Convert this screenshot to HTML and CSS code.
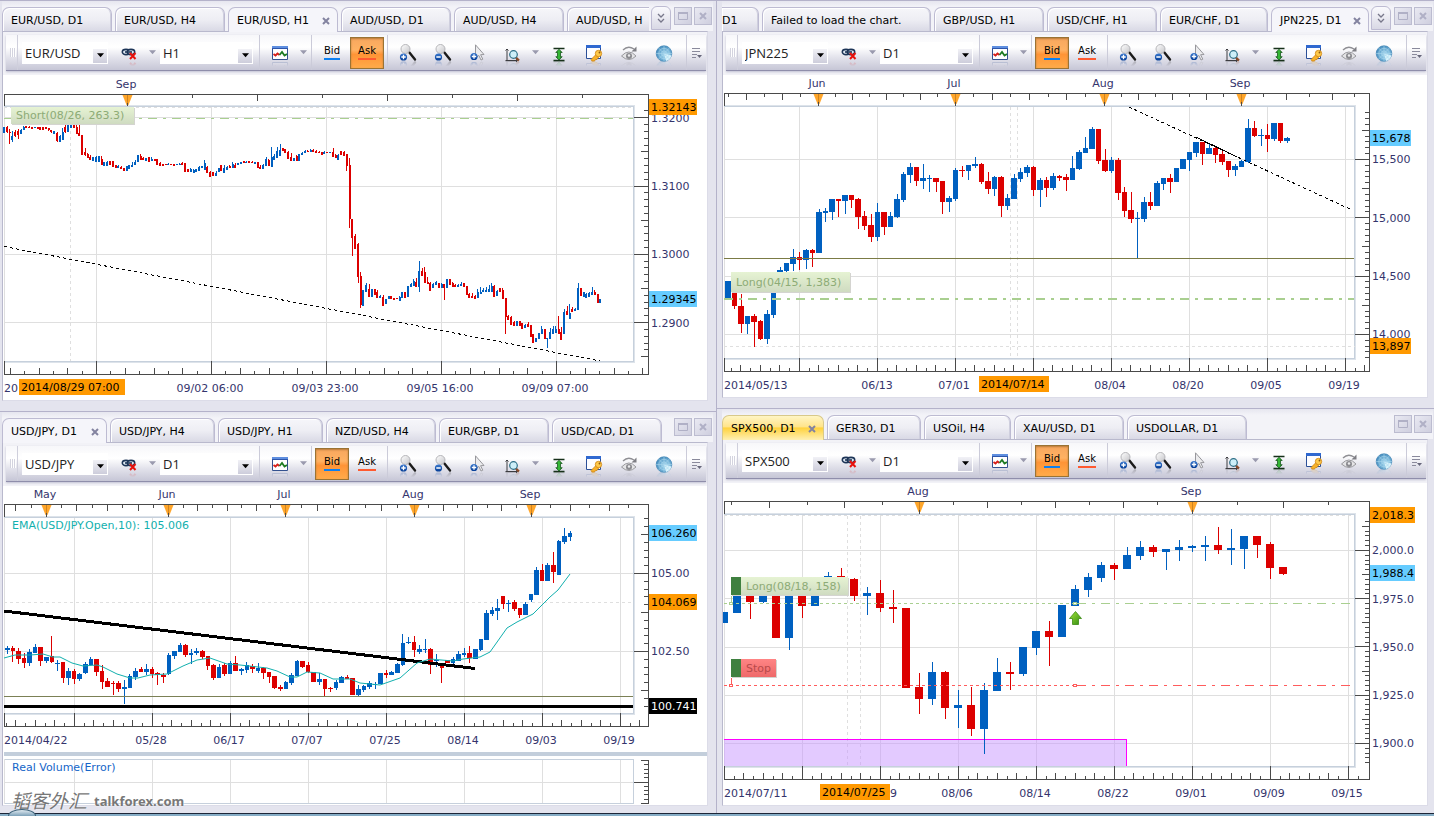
FILE: index.html
```html
<!DOCTYPE html>
<html lang="en">
<head>
<meta charset="utf-8">
<title>Trading Charts</title>
<link rel="stylesheet" href="styles.css">
</head>
<body>
<svg class="defs" aria-hidden="true">
  <defs>
    <linearGradient id="lens" x1="0" y1="0" x2="1" y2="1"><stop offset="0" stop-color="#fff"/><stop offset="1" stop-color="#c4c4c8"/></linearGradient>
    <linearGradient id="blueBall" x1="0" y1="0" x2="0" y2="1"><stop offset="0" stop-color="#3d7bd0"/><stop offset="1" stop-color="#003a94"/></linearGradient>
    <radialGradient id="radarFill" cx=".6" cy=".6" r=".7"><stop offset="0" stop-color="#a9dcf2"/><stop offset="1" stop-color="#3b84b8"/></radialGradient>
    <linearGradient id="greenBar" x1="0" y1="0" x2="1" y2="0"><stop offset="0" stop-color="#0c7a12"/><stop offset=".5" stop-color="#3cc43c"/><stop offset="1" stop-color="#0c6a10"/></linearGradient>
    <linearGradient id="tagGreen" x1="0" y1="0" x2="0" y2="1"><stop offset="0" stop-color="#e6f3d3"/><stop offset="1" stop-color="#cfdbc1"/></linearGradient>
    <linearGradient id="tagRed" x1="0" y1="0" x2="0" y2="1"><stop offset="0" stop-color="#ff8585"/><stop offset="1" stop-color="#ee6a6a"/></linearGradient>
    <linearGradient id="arrowGreen" x1="0" y1="0" x2="1" y2="1"><stop offset="0" stop-color="#a5e53a"/><stop offset="1" stop-color="#2f8a10"/></linearGradient>
  </defs>
  <symbol id="i-link" viewBox="0 0 18 18">
    <g fill="#dfe8f2" stroke="#1d3557" stroke-width="1.600"><ellipse cx="6" cy="8" rx="3.700" ry="2.600"/><ellipse cx="11" cy="8" rx="3.700" ry="2.600"/></g>
    <path d="M5 8h7" stroke="#1d3557" stroke-width="1.600"/><path d="M10 9l5.500 6M15.500 9l-5.500 6" stroke="#e8120c" stroke-width="2"/>
  </symbol>
  <symbol id="i-chart" viewBox="0 0 18 18">
    <path d="M1.500 3.500h15v12h-15z" fill="#fff" stroke="#33518f"/><path d="M1 2h16v3H1z" fill="#5f8fe0"/><path d="M1 4h16v1H1z" fill="#2d56ac"/>
    <path d="M2.500 10l2 1.500 2-2 2 1.500" fill="none" stroke="#d8201a" stroke-width="1.800"/><path d="M8.500 11l2.500-3 2.500 3.500 2.500-1.500" fill="none" stroke="#1c7a20" stroke-width="1.800"/>
  </symbol>
  <symbol id="i-zoomin" viewBox="0 0 18 18">
    <path d="M10 8l6 7.500" stroke="#1b1b1b" stroke-width="2.400" stroke-linecap="round"/><circle cx="6.500" cy="5" r="4.500" fill="url(#lens)" stroke="#b4b4b8"/>
    <circle cx="4.500" cy="13" r="3.600" fill="url(#blueBall)"/><path d="M2.300 13h4.400M4.500 10.800v4.400" stroke="#fff" stroke-width="1.300"/>
  </symbol>
  <symbol id="i-zoomout" viewBox="0 0 18 18">
    <path d="M10 8l6 7.500" stroke="#1b1b1b" stroke-width="2.400" stroke-linecap="round"/><circle cx="6.500" cy="5" r="4.500" fill="url(#lens)" stroke="#b4b4b8"/>
    <circle cx="4.500" cy="13" r="3.600" fill="url(#blueBall)"/><path d="M2.300 13h4.400" stroke="#fff" stroke-width="1.500"/>
  </symbol>
  <symbol id="i-cursor" viewBox="0 0 18 18">
    <path d="M6.500 .8l8.500 9.700-3.400.2 2.200 4.500-1.800.8-2.200-4.600-3.300 2.600z" fill="#ececee" stroke="#97979c"/>
    <circle cx="5" cy="12.500" r="3.600" fill="url(#blueBall)"/><path d="M2.800 12.500h4.400M5 10.300v4.400" stroke="#fff" stroke-width="1.300"/>
  </symbol>
  <symbol id="i-axiszoom" viewBox="0 0 18 18">
    <path d="M3 5v12M1.500 6.500L3 5l1.500 1.500M1.500 16.500h12M12 15.200l1.500 1.300-1.500 1.300" fill="none" stroke="#3c3c40"/>
    <path d="M11.500 13l3.500 3.500" stroke="#8a4a28" stroke-width="2.200"/><circle cx="9.500" cy="10.500" r="3.800" fill="#cdeff8" stroke="#2d6f86" stroke-width="1.200"/>
  </symbol>
  <symbol id="i-height" viewBox="0 0 18 18">
    <path d="M3.500 4.500h11M3.500 16.500h11" stroke="#17301a" stroke-width="1.400"/><path d="M9 5.200l3.200 3.300h-1.700v4.200h1.700L9 16l-3.200-3.300h1.700V8.500H5.800z" fill="url(#greenBar)" stroke="#0b4f10" stroke-width=".7"/>
  </symbol>
  <symbol id="i-key" viewBox="0 0 18 18">
    <path d="M1.500 1.500h14v13h-14z" fill="#fdfdff" stroke="#2b4f97"/><path d="M1 1h15v3H1z" fill="#2f68d0"/>
    <path d="M11.500 10L6 15.500l1 1.500h2.500l1-1.500h1.500l2-3" fill="#f6b12a" stroke="#ce8412" stroke-width=".8"/><circle cx="13.500" cy="9.500" r="3.200" fill="#ffc94a" stroke="#ce8412" stroke-width=".8"/><circle cx="14.500" cy="8.500" r=".9" fill="#8a5a10"/>
  </symbol>
  <symbol id="i-eye" viewBox="0 0 18 18">
    <path d="M1.500 12q7.500-8 14.500 0-7 7-14.500 0z" fill="#e4e4e6" stroke="#97979b"/><circle cx="9" cy="12" r="3" fill="#8b8b90"/><circle cx="9" cy="11.500" r="1.200" fill="#ececee"/>
    <path d="M3 6q5-5 11-1" fill="none" stroke="#8f8f94" stroke-width="1.300"/><path d="M16.500 2.500v5h-5z" fill="#7e7e84"/>
  </symbol>
  <symbol id="i-radar" viewBox="0 0 18 18">
    <circle cx="9" cy="9.500" r="7.800" fill="url(#radarFill)" stroke="#2f78ac" stroke-width=".6"/><path d="M9 9.500l7.500 2A7.800 7.800 0 0 1 11 17z" fill="#d8f2fb"/>
    <g fill="none" stroke="#a9d6ec" stroke-width=".6"><circle cx="9" cy="9.500" r="5.200"/><circle cx="9" cy="9.500" r="2.600"/><path d="M9 1.700v15.600M1.200 9.500h15.600M3.500 4l11 11M14.500 4l-11 11"/></g>
  </symbol>
  <symbol id="i-down" viewBox="0 0 8 5"><path d="M0 0h8L4 4.500z"/></symbol>
  <symbol id="i-more" viewBox="0 0 12 12"><path d="M1 1.500h8M1 4.500h8M1 7.500h5M1 10.500h4" stroke="#8a8a9c"/><path d="M6 8h5l-2.500 3z" fill="#66667a"/></symbol>
  <symbol id="i-x" viewBox="0 0 8 8"><path d="M1 1l6 6M7 1L1 7" stroke="currentColor" stroke-width="2"/></symbol>
  <symbol id="i-restore" viewBox="0 0 10 8"><path d="M.5 1h9v6.500h-9z" fill="none" stroke="currentColor"/><path d="M0 0h10v2H0z" fill="currentColor"/></symbol>
  <symbol id="i-chevrons" viewBox="0 0 8 10"><path d="M1 1l3 3 3-3M1 6l3 3 3-3" fill="none" stroke="#77778a" stroke-width="1.300"/></symbol>
</svg>

<template id="toolbar">
  <span class="grip"></span>
  <span class="combo combo-symbol"><select aria-label="Instrument"></select><span class="combo-arrow"><svg class="tri"><use href="#i-down"/></svg></span></span>
  <button class="tool tool-link" aria-label="Unlink chart"><svg class="icon"><use href="#i-link"/></svg></button>
  <button class="drop" aria-label="Link options"><svg class="tri"><use href="#i-down"/></svg></button>
  <span class="combo combo-period"><select aria-label="Period"></select><span class="combo-arrow"><svg class="tri"><use href="#i-down"/></svg></span></span>
  <span class="sep sep-wide"></span>
  <button class="tool tool-chart" aria-label="Chart type"><svg class="icon"><use href="#i-chart"/></svg></button>
  <button class="drop" aria-label="Chart type options"><svg class="tri"><use href="#i-down"/></svg></button>
  <span class="sep"></span>
  <button class="side side-bid"><span>Bid</span></button>
  <button class="side side-ask"><span>Ask</span></button>
  <span class="sep sep-near"></span>
  <button class="tool" aria-label="Zoom in"><svg class="icon"><use href="#i-zoomin"/></svg></button>
  <button class="tool" aria-label="Zoom out"><svg class="icon"><use href="#i-zoomout"/></svg></button>
  <button class="tool" aria-label="Cursor"><svg class="icon"><use href="#i-cursor"/></svg></button>
  <button class="tool" aria-label="Axis zoom"><svg class="icon"><use href="#i-axiszoom"/></svg></button>
  <button class="drop drop-narrow" aria-label="Axis zoom options"><svg class="tri"><use href="#i-down"/></svg></button>
  <button class="tool" aria-label="Fit height"><svg class="icon"><use href="#i-height"/></svg></button>
  <button class="tool" aria-label="Properties"><svg class="icon"><use href="#i-key"/></svg></button>
  <button class="tool" aria-label="Show"><svg class="icon"><use href="#i-eye"/></svg></button>
  <button class="tool" aria-label="Radar"><svg class="icon"><use href="#i-radar"/></svg></button>
  <button class="more" aria-label="More tools"><svg class="icon-more"><use href="#i-more"/></svg></button>
</template>

<main class="desk">
  <div class="column column-left">
    <section class="pane">
      <header class="strip">
        <nav class="tabs">
          <button class="tab">EUR/USD, D1</button>
          <button class="tab">EUR/USD, H4</button>
          <button class="tab tab-active">EUR/USD, H1<svg class="tab-x"><use href="#i-x"/></svg></button>
          <button class="tab">AUD/USD, D1</button>
          <button class="tab">AUD/USD, H4</button>
          <button class="tab tab-tail">AUD/USD, H</button>
        </nav>
        <button class="chevrons" aria-label="More charts"><svg><use href="#i-chevrons"/></svg></button>
        <button class="win" aria-label="Restore"><svg class="win-restore"><use href="#i-restore"/></svg></button>
        <button class="win" aria-label="Close"><svg class="win-close"><use href="#i-x"/></svg></button>
      </header>
      <div class="body">
        <div class="toolbar" data-symbol="EUR/USD" data-period="H1" data-side="ask"></div>
        <svg class="chart" id="eurusd" viewBox="3 75 704 325"></svg>
      </div>
    </section>
    <section class="pane pane-last">
      <header class="strip">
        <nav class="tabs">
          <button class="tab tab-yen tab-active">USD/JPY, D1<svg class="tab-x"><use href="#i-x"/></svg></button>
          <button class="tab tab-yen">USD/JPY, H4</button>
          <button class="tab tab-yen">USD/JPY, H1</button>
          <button class="tab">NZD/USD, H4</button>
          <button class="tab">EUR/GBP, D1</button>
          <button class="tab">USD/CAD, D1</button>
        </nav>
        <button class="win" aria-label="Restore"><svg class="win-restore"><use href="#i-restore"/></svg></button>
        <button class="win" aria-label="Close"><svg class="win-close"><use href="#i-x"/></svg></button>
      </header>
      <div class="body">
        <div class="toolbar" data-symbol="USD/JPY" data-period="D1" data-side="bid"></div>
        <svg class="chart" id="usdjpy" viewBox="3 486 704 319"></svg>
      </div>
      <div class="watermark"><span class="watermark-name" lang="zh">韬客外汇</span><span class="watermark-url">talkforex.com</span></div>
    </section>
  </div>
  <div class="column column-right">
    <section class="pane">
      <header class="strip">
        <nav class="tabs tabs-end">
          <button class="tab tab-cut">D1</button>
          <button class="tab tab-message">Failed to load the chart.</button>
          <button class="tab">GBP/USD, H1</button>
          <button class="tab">USD/CHF, H1</button>
          <button class="tab tab-franc">EUR/CHF, D1</button>
          <button class="tab tab-nikkei tab-active">JPN225, D1<svg class="tab-x"><use href="#i-x"/></svg></button>
        </nav>
        <button class="chevrons" aria-label="More charts"><svg><use href="#i-chevrons"/></svg></button>
        <button class="win" aria-label="Restore"><svg class="win-restore"><use href="#i-restore"/></svg></button>
        <button class="win" aria-label="Close"><svg class="win-close"><use href="#i-x"/></svg></button>
      </header>
      <div class="body">
        <div class="toolbar" data-symbol="JPN225" data-period="D1" data-side="bid"></div>
        <svg class="chart" id="jpn225" viewBox="723 75 704 322"></svg>
      </div>
    </section>
    <section class="pane pane-last">
      <header class="strip">
        <nav class="tabs">
          <button class="tab tab-spx tab-active tab-focus">SPX500, D1<svg class="tab-x"><use href="#i-x"/></svg></button>
          <button class="tab tab-dax">GER30, D1</button>
          <button class="tab tab-oil">USOil, H4</button>
          <button class="tab">XAU/USD, D1</button>
          <button class="tab tab-dollar">USDOLLAR, D1</button>
        </nav>
        <button class="win" aria-label="Restore"><svg class="win-restore"><use href="#i-restore"/></svg></button>
        <button class="win" aria-label="Close"><svg class="win-close"><use href="#i-x"/></svg></button>
      </header>
      <div class="body">
        <div class="toolbar" data-symbol="SPX500" data-period="D1" data-side="bid"></div>
        <svg class="chart" id="spx500" viewBox="723 483 704 322"></svg>
      </div>
    </section>
  </div>
</main>
<footer class="taskbar"><span class="orb"></span></footer>
<script src="charts.js"></script>
</body>
</html>
```
FILE: styles.css
```css
* { box-sizing: border-box; }
body { margin: 0; background: #e4e4ee; font-family: "DejaVu Sans", Verdana, sans-serif; font-size: 11px; color: #000; }
button { font: inherit; color: inherit; margin: 0; padding: 0; border: 0; background: none; }
.defs { position: absolute; width: 0; height: 0; }

.desk { display: grid; grid-template-columns: 716fr 718fr; }
.column { display: flex; flex-direction: column; min-width: 0; }
.pane { position: relative; border-top: 1px solid #b4b2ca; padding-bottom: 10px; background: #e4e4ee; }
.pane-last { padding-bottom: 7px; }
.column-left .pane { padding-left: 2px; padding-right: 8px; }
.column-right .pane { padding-left: 5px; padding-right: 6px; border-left: 1px solid #b4b2ca; }

.strip { display: flex; align-items: flex-start; height: 30px; margin-right: -5px; background: linear-gradient(#e6e6ef, #f3f3f8 6px); }
.tabs { flex: 1; min-width: 0; display: flex; gap: 3px; overflow: hidden; height: 31px; padding-top: 6px; position: relative; }
.tabs-end { justify-content: flex-end; padding-right: 1px; }
.tab { flex: none; width: 110px; height: 24px; padding: 1px 0 0 8px; text-align: left; white-space: nowrap; border: 1px solid #bdbbd2; border-bottom: 0; border-radius: 7px 7px 0 0; background: linear-gradient(#f6f6fa, #eeeef4 50%, #d9d9e5); box-shadow: inset 1px 1px 0 #fff, inset -1px 0 0 #cfcfde; }
.tab-active { display: flex; align-items: center; justify-content: space-between; height: 25px; padding-right: 7px; background: #f5f5fa; box-shadow: none; }
.tab-x { width: 8px; height: 8px; color: #8383a0; }
.tab-yen { width: 105px; }
.tab-franc { width: 108px; }
.tab-message { width: 169px; }
.tab-nikkei { width: 98px; }
.tab-spx { width: 102px; }
.tab-dax { width: 94px; }
.tab-oil { width: 87px; }
.tab-dollar { width: 120px; }
.tab-cut { width: 37px; padding-left: 0; border-left: 0; border-top-left-radius: 0; }
.tab-tail { width: 82px; border-right: 0; border-top-right-radius: 0; box-shadow: inset 1px 1px 0 #fff; }
.chevrons { width: 20px; height: 24px; margin: 5px 2px 0 1px; border: 1px solid #bdbbd2; border-radius: 6px 6px 0 0; background: linear-gradient(#fafafd, #d9d9e5); }
.chevrons svg { width: 8px; height: 10px; display: block; margin: 0 auto; }
.tab-focus { background: linear-gradient(#fff5c4, #ffe48a 45%, #ffd23e 50%, #fff0b4); border-color: #d8c98a; }
.win { width: 18px; height: 18px; margin: 6px 1px 0; border: 1px solid #bcbcd0; background: linear-gradient(135deg, #e9e9f2, #cfcfdf); color: #b0b0c6; display: flex; align-items: center; justify-content: center; }
.win-restore { width: 10px; height: 8px; }
.win-close { width: 8px; height: 8px; }

.body { border: 1px solid #b9b9cd; border-right-color: #dcdce8; border-bottom-color: #dcdce8; background: #f2f2f7; padding-top: 3px; }
.toolbar { display: flex; align-items: center; height: 36px; margin: 0 1px 4px 3px; border-bottom: 1px solid #8f8eab; background: linear-gradient(#f7f7fa, #fff 35%, #e2e2eb 65%, #c6c6d6); box-shadow: 0 1px 2px #c0c0d2; }
.grip { align-self: stretch; width: 12px; margin-right: 4px; border-right: 1px solid #cfcfdc; background: repeating-linear-gradient(90deg, #d4d4df 0 1px, #fff 1px 2px) 4px 13px / 6px 9px no-repeat; }
.combo { position: relative; display: flex; height: 22px; background: #fff; }
.combo-symbol { width: 86px; }
.combo-period { width: 93px; }
.combo select { appearance: none; width: 100%; border: 0; background: none; padding: 0 16px 0 3px; font: 13px/20px "Open Sans", sans-serif; color: #222; }
.combo-arrow { position: absolute; right: 1px; bottom: 1px; width: 14px; height: 14px; display: flex; align-items: center; justify-content: center; background: linear-gradient(#f1f1f6, #cdcddb); pointer-events: none; }
.tri { width: 7px; height: 5px; fill: #9a9aae; }
.combo-arrow .tri { fill: #000; }
.tool { width: 35px; height: 34px; display: flex; align-items: center; justify-content: center; }
.tool-link { width: 30px; margin-left: 6px; }
.tool-chart { width: 30px; margin-left: 5px; }
.icon { width: 18px; height: 18px; -webkit-box-reflect: below -2px linear-gradient(transparent 65%, rgba(0, 0, 0, .3)); }
.drop { width: 14px; display: flex; justify-content: center; }
.tool-chart + .drop { width: 16px; }
.tool-link + .drop { width: 16px; }
.drop-narrow { width: 11px; }
.sep { align-self: stretch; width: 1px; background: #cbcbd9; }
.sep-wide { margin-left: 6px; }
.sep-near { margin: 0 2px 0 3px; }
.side { width: 34px; height: 32px; font-size: 10px; line-height: 12px; }
.side span { display: inline-block; padding-bottom: 1px; border-bottom: 2px solid #0b7ff0; }
.side-bid { margin-left: 3px; }
.side-ask { margin-left: 1px; }
.side-ask span { border-color: #ff5a30; }
.side-on { border: 1px solid #9a7334; background: linear-gradient(#f7a75e, #ffb263 40%, #ff9436 55%, #ffab4a); box-shadow: inset 0 1px 2px #b8793a; }
.more { align-self: stretch; width: 20px; margin-left: auto; border-left: 1px solid #cbcbd9; display: flex; align-items: center; justify-content: center; }
.icon-more { width: 12px; height: 12px; }

.chart { display: block; width: 100%; height: auto; background: #fff; font-family: "DejaVu Sans", Verdana, sans-serif; font-size: 11px; }
.crisp { shape-rendering: crispEdges; }
.axis-text { fill: #34346c; }
.mid { text-anchor: middle; }

.watermark { position: absolute; left: 11px; bottom: 2px; display: flex; align-items: flex-end; gap: 7px; color: #777; text-shadow: 0 0 2px #fff; }
.watermark-name { font: italic 19px/22px "Noto Sans CJK SC", sans-serif; }
.watermark-url { font: bold 13px/19px "Noto Sans", sans-serif; }

.taskbar { position: relative; height: 3px; background: linear-gradient(#1c2638 1px, #86adc6 1px); overflow: visible; }
.orb { position: absolute; left: 8px; bottom: 0; width: 28px; height: 7px; border: 1px solid #3a6078; border-bottom: 0; border-radius: 14px 14px 0 0 / 7px 7px 0 0; background: linear-gradient(#dfe9f0, #7ba0b8); }
```
FILE: charts.js
```js
const BLUE = '#0060c0', RED = '#dc0000', AXIS = '#4a4a4a', GRID = '#dfdfdf', FRAME = '#c6d0dc';

const rect = (x, y, w, h, fill) => `<rect x="${Math.floor(x)}" y="${Math.floor(y)}" width="${w}" height="${h}" fill="${fill}"/>`;
const hline = (x1, x2, y, color, dash, thick = 1) => `<path d="M${x1} ${Math.floor(y) + thick / 2}H${x2}" stroke="${color}" stroke-width="${thick}"${dash ? ` stroke-dasharray="${dash}"` : ''}/>`;
const vline = (x, y1, y2, color, dash) => `<path d="M${Math.floor(x) + 0.5} ${y1}V${y2}" stroke="${color}"${dash ? ` stroke-dasharray="${dash}"` : ''}/>`;
const text = (x, y, s, cls = 'axis-text', fill = '') => `<text x="${x}" y="${y}" class="${cls}"${fill ? ` fill="${fill}"` : ''}>${s}</text>`;
const badge = (x, y, w, s, fill, color = '#000') => rect(x, y, w, 16, fill) + text(x + 2, y + 12, s, '', color);

/* "b" is a rising bar, "r" a falling one: high, body top, body bottom, low.
   Bodies take the chart's fixed width, or fill the step up to a one-pixel gap. */
function candles(c) {
  return c.bars.trim().split(/\s+/).map((bar, i) => {
    const [hi, top, bot, lo = bot] = bar.slice(1).split(',').map(Number);
    const fill = bar[0] === 'b' ? BLUE : RED;
    const x = c.x0 + c.step * i;
    const left = Math.round(x - c.lead);
    const width = c.body || Math.round(x + c.step - c.lead) - left - 1;
    return rect(x, hi, 1, lo - hi, fill) + rect(left, top, width, Math.max(1, bot - top), fill);
  }).join('');
}

function frame(c) {
  const [l, t, r, b] = c.plot;
  const ax = r + 15;
  let s = '';
  for (let x = c.gridX; x < r; x += c.gridStep) s += vline(x, t + 1, b, GRID);
  c.prices.forEach(p => { s += hline(l, r, p[0], GRID); });
  s += `<path d="M${l + .5} ${t}V${b}" stroke="${GRID}"/>`;
  s += `<path d="M${l} ${t + .5}H${r + .5}V${b + .5}H${l}" fill="none" stroke="${FRAME}"/><path d="M${l} ${t - .5}H${r + 1.5}V${b + 1.5}H${l}" fill="none" stroke="#dde3ea"/>`;
  s += `<path d="M${l + .5} ${t}V${c.top + .5}H${ax + .5}V${c.bottom + .5}H${l + .5}V${b}" fill="none" stroke="${AXIS}"/>`;
  c.ticks.forEach(v => { s += vline(Math.abs(v), c.top, c.top + (v < 0 ? 4 : 7), AXIS); });
  const sub = c.gridStep / 8;
  for (let k = -8; k < 90; k++) {
    const x = c.gridX + k * sub;
    if (x < l + 2 || x > ax - 2) continue;
    const major = k % 8 === 0;
    s += vline(x, major ? b : c.bottom - (k % 2 ? 3 : 6), c.bottom, AXIS);
  }
  const p0 = c.prices[0][0];
  const ps = c.priceStep / 10;
  for (let k = -12; k < 60; k++) {
    const y = p0 + k * ps;
    if (y < c.priceFrom || y > c.priceTo) continue;
    s += hline(k % 10 === 0 ? r + 1 : k % 5 === 0 ? ax - 7 : ax - 4, ax, y, AXIS);
  }
  s = `<g class="crisp">${s}</g>`;
  c.months.forEach(m => {
    s += `<path d="M${m[0] - 4.5} ${c.top + 1}h10l-4 10h-2z" fill="#ffa62b"/>`
      + vline(m[0], c.top + 1, c.top + 9, '#d08420') + vline(m[0], c.top + 9, t, AXIS);
  });
  c.prices.forEach(p => { s += text(ax + 3, Math.round(p[0]) + 4, p[1]); });
  c.months.forEach(m => { s += text(m[0] - 1, c.top - 6, m[1], 'axis-text mid'); });
  c.dates.forEach(d => { s += text(d[0], c.bottom + 18, d[1], d[2] ? 'axis-text' : 'axis-text mid'); });
  return s;
}

function tag(x, y, w, h, label, kind) {
  const red = kind === 'stop';
  let s = rect(x + 1, y + 1, w, h, '#d4d4d0') + rect(x, y, w, h, red ? 'url(#tagRed)' : 'url(#tagGreen)');
  let tx = x + 5;
  if (kind) { s += rect(x, y, 10, h, '#3f8040'); tx = x + 15; }
  return s + text(tx, y + Math.floor(h / 2) + 4, label, '', red ? '#b84a4a' : '#8dab76');
}

const DASHDOT = '9 6 3 6';
const draw = (id, s) => { document.getElementById(id).innerHTML = s; };

const eurusd = {
  plot: [4, 106, 633, 361], top: 94, bottom: 374, gridX: 96.5, gridStep: 115,
  ticks: [-192, 257, -322, 387, -452, 517, -582], months: [[127, 'Sep']],
  prices: [[117.7, '1.3200'], [186, '1.3100'], [254.3, '1.3000'], [322.6, '1.2900']], priceStep: 68.3, priceFrom: 108, priceTo: 358,
  dates: [[4, '20', 1], [210, '09/02 06:00'], [325, '09/03 23:00'], [440, '09/05 16:00'], [555, '09/09 07:00']],
  x0: 4.3, step: 2.786, body: 2, lead: 1.2,
  bars: `b127,127,133 r126,127,132,133 r129,132,133,144 b131,136,140,142 r130,132,136,137 r129,131,135,139 b129,130,134 b126,127,130 r126,126,128 r126,127,128
  r127,127,129 b127,127,128 r127,127,129 r127,127,130 r127,127,130 r127,127,129 r128,128,130,131 r130,130,132,133 b131,131,134 r132,133,141,142
  b135,136,142 b128,132,140 r123,127,132,133 b124,124,132 b124,124,128 r125,125,128 r125,127,134 r124,133,136 r135,135,155 r148,152,155,156
  r153,154,158 r155,157,160 b157,157,161 b156,157,162 b156,156,162 r156,159,165 b162,162,166 b161,162,166 r161,161,165 r161,161,167
  r165,165,168 b165,166,168 r166,167,169 r168,168,171 b166,166,171 b165,165,169 b162,165,167 b160,162,165 b155,155,162 r154,156,160
  r157,158,160 b158,158,161 r157,157,162 b157,159,161 r159,159,161 r159,159,165 r162,163,166 r164,164,166 r164,164,165 b163,164,165
  r164,164,165 r164,164,166 b164,164,165 b163,164,165 r162,163,165 r163,163,172 r169,169,172 b168,169,172 b169,170,173 b169,169,172
  b166,167,171 b166,166,168 b160,163,170 r166,167,173 r171,172,177 r172,172,176 b171,173,176 b168,168,172 r165,165,171 b165,168,173
  b166,167,170 r165,166,168 b162,164,168 r163,165,168 b163,163,165 b162,162,164 r161,161,163 b161,162,163 r161,161,163 r161,162,163
  b162,162,164 r162,162,168 r165,167,169 b164,165,169 b157,159,166 r159,160,166 b147,157,167 b154,156,160 b147,151,158 b144,150,156
  r148,148,151 r149,149,153 r151,152,159 r153,157,161 b158,158,161 r155,156,161 b154,154,161 b152,153,155 b150,151,153 r150,151,152
  b149,150,152 r149,150,152 r150,151,153 r151,152,153 r152,152,155 b151,152,154 r152,152,153 b152,152,153 r148,152,157 r154,155,158
  b154,155,160 r151,151,155 r151,152,156 r154,154,166,171 r158,165,219,228 r219,219,238,256 r234,236,249 r243,244,277,283 r272,276,305,308 b290,290,306
  b283,285,292 r284,289,297 b289,289,297 r289,289,295 r290,292,298 b295,296,298 r295,297,306 b299,299,304 b296,296,299 r296,296,299
  r298,298,300 r298,298,299 b296,297,301 b292,292,298 r292,292,298 b286,286,297 b283,284,287 b279,281,286 r278,282,287 b261,271,287,292
  r268,271,276 r267,272,283 r277,282,284 r282,283,291 b283,284,288 b281,282,285 r283,283,288 b283,284,288 r284,284,288,300 b279,279,288
  r279,279,285 r282,283,287 r284,285,287 b284,285,287 b282,284,286 r283,283,287 r286,286,295 r293,294,298 r293,296,298 r295,296,299
  b289,292,298 b287,292,294 b288,290,292 b287,290,292 b285,289,292 b283,286,292 r285,286,297 b290,291,296 r288,288,292 r288,290,299
  r298,298,317,334 r315,316,320 r316,317,325 r321,322,326 b321,321,326 r321,321,326 r323,323,329 b324,325,328 r322,324,327 r325,325,337
  r334,334,343 b338,338,342 b333,333,339 b326,329,334 r329,329,339 b338,338,339,348 b328,332,339 b326,329,334 b326,329,333 r316,329,334
  r327,332,340 b309,312,334 r306,311,315 b304,313,319 r307,309,312 b308,309,311 b283,288,310 r288,288,296 b292,292,297 b293,294,298
  b292,293,297 b287,292,295 r290,292,295 r294,294,303 b299,299,303`
};
draw('eurusd', frame(eurusd) + `<g class="crisp">` + hline(4, 633, 107, GRID, '3 3') + vline(70, 107, 361, GRID, '3 3')
  + candles(eurusd) + hline(4, 633, 118, '#a9cf90', DASHDOT)
  + `<path d="M4 246.500L600 361" stroke="#000" stroke-dasharray="3 3"/></g>`
  + tag(11, 107, 123, 17, 'Short(08/26, 263.3)')
  + badge(19, 379, 106, '2014/08/29 07:00', '#ff9900') + badge(649, 99, 48, '1.32143', '#ff9900') + badge(649, 291, 48, '1.29345', '#66ccff'));

const jpn225 = {
  plot: [724, 106, 1354, 358], top: 93, bottom: 371, gridX: 799.3, gridStep: 78,
  ticks: [-728, 746, -764, 782, -800, -835, 852, -869, 886, -903, 920, -937, -973, 992, -1010, 1029, -1048, 1066, -1085, -1121, 1138, -1155, 1172, -1189, 1206, -1223, -1263, 1286, -1309, 1332, -1354],
  months: [[818, 'Jun'], [955, 'Jul'], [1104, 'Aug'], [1241, 'Sep']],
  prices: [[159.4, '15,500'], [217.7, '15,000'], [276, '14,500'], [334.4, '14,000']], priceStep: 58.33, priceFrom: 110, priceTo: 358,
  dates: [[724, '2014/05/13', 1], [877, '06/13'], [954, '07/01'], [1110, '08/04'], [1188, '08/20'], [1266, '09/05'], [1344, '09/19']],
  x0: 728.3, step: 6.5, lead: 3.25,
  bars: `b281,281,298 r290,292,306,309 r294,306,324,333 b316,316,324,334 r314,316,322,347 r320,321,339,340 b310,314,339,344 b278,280,315,318 b267,270,280,282 b263,263,271,273
  b249,257,264,271 r252,257,260,270 b249,250,260,269 r249,250,253,267 b209,212,253 b208,211,213,222 b199,199,212,220 r199,199,201,217 b195,195,201,214 r195,195,200,208
  r198,199,217,229 r211,216,226,230 r214,225,237,242 b203,212,237,241 r212,212,227,235 b212,216,227 b194,199,217,218 b172,174,200,202 b163,167,175,183 r167,167,181,186
  b164,178,181,189 b175,178,179,192 r178,178,182,192 r181,181,202,214 b196,198,202,212 b168,170,199,201 r166,170,171,177 b165,165,171,180 b157,164,166,168 r163,164,182,184
  r172,181,189,194 b176,177,189,196 r176,177,206,217 b194,198,206,210 b174,178,199 b168,172,179,182 b165,167,173,177 r166,167,190,196 b178,180,190,207 r177,180,188,197
  b173,176,188,190 r175,176,178,181 r174,177,180,191 b156,168,180 b150,152,169,170 b137,148,153 b127,129,149 r129,129,161,164 r149,160,171,172 b157,160,171,173
  r158,160,193,200 r187,192,211,217 r192,210,219,223 b212,218,219,258 b197,202,219,222 r192,202,206,210 b181,183,206 b178,178,184,190 r174,178,182,193 b168,168,182
  b159,159,169 b152,152,160,171 b142,142,153,157 r142,142,154,165 b144,148,154 r147,148,155,163 r149,154,162,165 r161,161,170,177 b164,166,170,176 b160,161,167
  b119,128,162,163 r121,128,136,137 b129,135,136,146 r124,135,139,152 b123,123,139,141 r123,123,141,143 b137,138,141,143`
};
draw('jpn225', frame(jpn225) + `<g class="crisp">` + vline(1010, 107, 357, GRID, '3 3') + vline(1017, 107, 357, GRID, '3 3') + hline(724, 1355, 346, GRID, '3 3')
  + candles(jpn225) + hline(724, 1354, 258, '#7b7b45') + hline(724, 1354, 298, '#a9cf90', DASHDOT, 2)
  + `<path d="M1129 107L1352 210" stroke="#000" stroke-dasharray="3 3"/><path d="M1196 137L1237 157" stroke="#000"/></g>`
  + tag(731, 272, 119, 20, 'Long(04/15, 1,383)')
  + badge(979, 376, 70, '2014/07/14', '#ff9900') + badge(1370, 130, 41, '15,678', '#66ccff') + badge(1370, 338, 41, '13,897', '#ff9900'));

const usdjpy = {
  plot: [4, 517, 633, 713], top: 504, bottom: 726, gridX: 74.4, gridStep: 78,
  ticks: [15, -31, -61, 76, -92, 107, -122, 138, -153, -183, 197, -212, 227, -241, 256, -270, -301, 317, -333, 349, -365, 381, -397, -428, 443, -457, 472, -487, 501, -516, -550, 570, -589, 609, -628],
  months: [[46, 'May'], [168, 'Jun'], [285, 'Jul'], [414, 'Aug'], [531, 'Sep']],
  prices: [[573.4, '105.00'], [651.4, '102.50']], priceStep: 78, priceFrom: 517, priceTo: 708,
  dates: [[4, '2014/04/22', 1], [151, '05/28'], [229, '06/17'], [307, '07/07'], [385, '07/25'], [463, '08/14'], [541, '09/03'], [619, '09/19']],
  x0: 7.4, step: 5.571, lead: 2.4,
  bars: `b646,648,650,654 r646,648,651,662 r648,651,659,664 r653,658,663,668 b649,652,663,666 b644,647,653 r647,647,661,666 b657,657,661,663 r636,656,662,663 b660,663,664,671
  r662,662,678,683 b668,671,678,685 r669,671,679,684 b673,674,679,681 b662,664,673,674 b657,659,665 r659,659,672,676 r665,671,682,689 r678,681,687 r681,683,684,695
  r681,683,689,692 b680,687,689,704 b674,676,688 b668,671,677,680 r667,669,672 b664,669,672,675 r667,669,674,678 r672,673,675,685 r673,675,677,683 b653,655,674,675
  b651,651,656,659 b643,645,652 r644,645,655,657 b649,653,655,664 b648,651,653,655 r650,651,657,659 r656,656,666,670 r664,665,678,680 b664,667,678 r663,665,674,676
  b661,663,674 r656,663,671 b668,669,671,675 b662,665,670,673 r664,666,669,673 b663,668,671,673 r667,668,673,679 r672,672,677,683 r676,676,688,689 r685,687,689,691
  b681,682,689 b673,675,683,685 b660,661,676 r661,661,667,668 r662,665,672,673 r672,672,682 b673,679,682,685 r679,679,689,696 r687,688,689,692 b680,682,688,690
  b676,677,683 r675,677,679 r678,678,695 b685,689,695,696 b685,686,690,692 b681,683,687,689 b682,684,685,689 b673,673,684 r670,673,675,678 b671,672,675
  b663,664,673 b634,643,665,666 b637,642,643,644 r636,642,650,657 b645,649,652,654 b639,649,650,653 r648,649,665,674 b654,660,661,667 r664,665,668,683 r660,660,663
  b657,659,663,664 b651,654,661 b648,653,655,657 r646,653,658,663 b649,649,659 b639,639,650,651 b610,613,640 b607,610,614,616 b599,608,611,620 r596,596,604,609
  b600,603,604,612 r600,602,609,611 r608,608,615,618 b602,604,615 b594,594,600,602 b567,570,595 r564,570,581 b563,565,581 r552,565,572,583 b540,541,575
  b528,536,542,544 b531,533,537,541`
};
let volume = rect(4, 752, 703, 4, '#c3cedb');
for (let x = 74; x < 633; x += 78) volume += vline(x, 760, 803, GRID);
volume += hline(4, 633, 782, GRID) + vline(4, 759, 804, GRID) + `<path d="M4.500 759.500H633.500V803.500H4.500" fill="none" stroke="${FRAME}"/>` + vline(648, 760, 804, AXIS);
for (let k = -5; k < 6; k++) volume += hline(k === 0 ? 634 : Math.abs(k) === 5 ? 641 : 644, 648, 782 + k * 4.3, AXIS);
draw('usdjpy', frame(usdjpy) + `<g class="crisp">` + hline(4, 633, 602, GRID, '3 3') + candles(usdjpy)
  + hline(4, 633, 696, '#7b8055') + hline(4, 633, 705, '#000', '', 3) + volume
  + `<path d="M4 611L475 668.500" stroke="#000" stroke-width="3"/></g>`
  + `<polyline fill="none" stroke="#12b0ae" points="4,658 15,655 30,655 43,654 53,657 60,657 72,663 83,666 97,665 103,667 117,674 130,678 138,678 150,675 167,674 183,666 197,660 210,658 227,664 240,665 267,668 277,671 290,677 297,677 307,672 320,673 333,679 350,679 360,683 380,685 400,678 417,663 430,659 453,661 463,659 480,657 490,652 507,628 517,622 533,614 550,597 558,590 570,574"/>`
  + text(12, 529, 'EMA(USD/JPY.Open,10): 105.006', '', '#12b0ae') + text(12, 771, 'Real Volume(Error)', '', '#1565c8')
  + badge(649, 525, 48, '106.260', '#66ccff') + badge(649, 594, 48, '104.069', '#ff9900') + badge(649, 698, 48, '100.741', '#000', '#fff'));

const spx500 = {
  plot: [724, 514, 1354, 766], top: 501, bottom: 779, gridX: 802.4, gridStep: 78,
  ticks: [-731, 769, -807, 844, -882, -953, 987, -1021, 1055, -1089, 1123, -1157, -1237, 1283, -1328],
  months: [[919, 'Aug'], [1192, 'Sep']],
  prices: [[550.4, '2,000.0'], [598.6, '1,975.0'], [647, '1,950.0'], [695.2, '1,925.0'], [743.4, '1,900.0']], priceStep: 48.25, priceFrom: 517, priceTo: 764,
  dates: [[724, '2014/07/11', 1], [890, '9', 1], [957, '08/06'], [1035, '08/14'], [1113, '08/22'], [1191, '09/01'], [1269, '09/09'], [1347, '09/15']],
  x0: 724.3, step: 13, body: 8, lead: 4,
  bars: `b612,612,623 b592,592,613 r593,593,602,619 b593,593,602,603 r590,590,638 b588,588,638,650 r585,585,606,618 b590,590,606 b572,576,590 r568,576,585,590
  r578,579,596,601 b587,593,596,615 r580,593,608,612 r590,607,609,623 r608,608,688 r673,687,699,714 b662,672,699,705 r671,672,708,719 b690,705,708,728 r687,705,729,736
  b683,690,729,754 b658,672,691 r662,672,674,690 b647,647,674,676 b631,631,648,655 r621,631,637,666 b605,605,637 b585,589,606 b573,577,590,597 b562,565,578,582
  r563,565,569,580 b547,555,569 b541,547,556,560 r545,547,552,557 b549,549,552,570 b540,547,550,561 b545,546,548,552 b536,545,547,561 r527,545,550,554 b529,548,550,565
  b536,536,549,569 r536,536,545,558 r542,544,568,579 r567,567,574,575`
};
const level = (y, color) => hline(724, 1075, y, color, '3 3') + hline(1077, 1354, y, color, DASHDOT)
  + `<g fill="#fff" stroke="${color}"><circle cx="731" cy="${y + .5}" r="1.500"/><circle cx="1075" cy="${y + .5}" r="1.500"/></g>` + vline(731, y - 7, y - 1, color);
draw('spx500', frame(spx500) + `<g class="crisp">` + hline(724, 1354, 515, GRID, '3 3') + vline(847, 516, 765, GRID, '3 3') + vline(860, 516, 765, GRID, '3 3')
  + `<path d="M724 740H1126V766H724z" fill="#c896ff" fill-opacity=".5"/><path d="M724 739.500H1126.500V766" fill="none" stroke="#ff00ff"/>`
  + candles(spx500) + level(603, '#a9cf90') + level(685, '#ff5c5c') + '</g>'
  + `<path d="M1075.500 611.500l6 7h-3v6h-6v-6h-3z" fill="url(#arrowGreen)" stroke="#3b8a14" stroke-width=".8"/>`
  + tag(731, 577, 117, 18, 'Long(08/18, 158)', 'open') + tag(731, 659, 45, 18, 'Stop', 'stop')
  + badge(820, 784, 70, '2014/07/25', '#ff9900') + badge(1370, 507, 45, '2,018.3', '#ff9900') + badge(1370, 565, 45, '1,988.4', '#66ccff'));

document.querySelectorAll('.toolbar').forEach(bar => {
  bar.append(document.getElementById('toolbar').content.cloneNode(true));
  const [symbol, period] = bar.querySelectorAll('select');
  symbol.add(new Option(bar.dataset.symbol));
  period.add(new Option(bar.dataset.period));
  bar.querySelector('.side-' + bar.dataset.side).classList.add('side-on');
});
```
